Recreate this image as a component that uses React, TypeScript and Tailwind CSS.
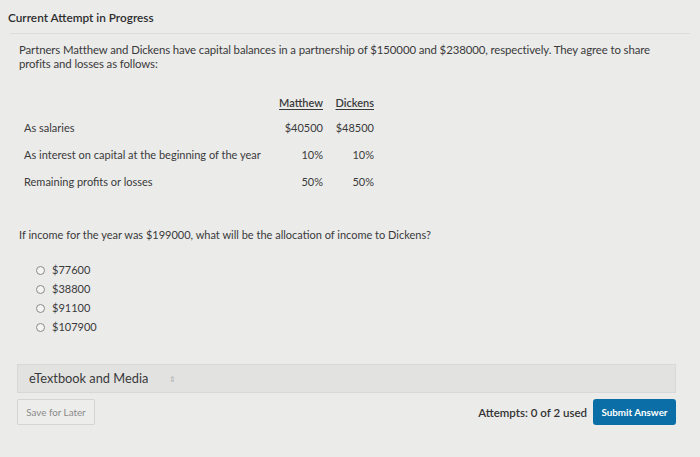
export default function App() {
  const rows = [
    ['As salaries', '$40500', '$48500'],
    ['As interest on capital at the beginning of the year', '10%', '10%'],
    ['Remaining profits or losses', '50%', '50%'],
  ]
  return (
    <div className="w-[700px] h-[457px] overflow-hidden bg-[#ebebea] font-['Lato',sans-serif] text-[#3a3a3a]">
      <div className="pt-[9px] pl-[8px] text-[11.8px] font-semibold text-[#2e2e2e]">Current Attempt in Progress</div>
      <div className="mt-[6px] mx-[10px] border-t border-[#dcdcdc]" />
      <div className="pl-[19px] pr-[40px] pt-[9px] text-[11.4px] leading-[14px] tracking-[-0.1px]">
        Partners Matthew and Dickens have capital balances in a partnership of $150000 and $238000, respectively. They agree to share profits and losses as follows:
      </div>

      <div className="ml-[24px] mt-[24px] grid grid-cols-[252px_47px_51px] text-[11px]">
        <div />
        <div className="text-right font-semibold underline underline-offset-2 h-[16px]">Matthew</div>
        <div className="text-right font-semibold underline underline-offset-2 h-[16px]">Dickens</div>
        {rows.map(([label, m, d], i) => (
          <div key={label} className="contents">
            <div className={`flex items-center h-[27px] ${i === 0 ? 'mt-[4px]' : ''}`}>{label}</div>
            <div className={`flex items-center justify-end h-[27px] ${i === 0 ? 'mt-[4px]' : ''}`}>{m}</div>
            <div className={`flex items-center justify-end h-[27px] ${i === 0 ? 'mt-[4px]' : ''}`}>{d}</div>
          </div>
        ))}
      </div>

      <div className="pl-[19px] mt-[31px] text-[11px]">
        If income for the year was $199000, what will be the allocation of income to Dickens?
      </div>

      <div className="pl-[36px] mt-[20px] flex flex-col gap-[4px] text-[11px]">
        {['$77600', '$38800', '$91100', '$107900'].map((v) => (
          <label key={v} className="flex items-center gap-[7px] h-[15px]">
            <span className="w-[9px] h-[9px] rounded-full border border-[#8a8a8a] bg-[#f4f4f4]" />
            <span>{v}</span>
          </label>
        ))}
      </div>

      <div className="mt-[29px] mx-[17px] w-[659px] h-[29px] bg-[#e2e2e1] border border-[#d8d8d8] flex items-center pl-[11px] text-[12.8px] text-[#3a3a3a]">
        eTextbook and Media
        <span className="ml-[21px] text-[8px] text-[#b0b0b0]">⇕</span>
      </div>

      <div className="mt-[6px] mx-[17px] w-[659px] flex items-center justify-between">
        <button className="h-[26px] w-[78px] border border-[#d4d4d4] rounded-[2px] text-[9.8px] text-[#8a8a8a] bg-[#ededec]">
          Save for Later
        </button>
        <div className="flex items-center gap-[6px]">
          <span className="text-[11.5px] font-semibold text-[#333]">Attempts: 0 of 2 used</span>
          <button className="h-[26px] w-[83px] rounded-[3px] bg-[#0b6ea7] text-white text-[9.8px] font-bold">
            Submit Answer
          </button>
        </div>
      </div>
    </div>
  )
}
